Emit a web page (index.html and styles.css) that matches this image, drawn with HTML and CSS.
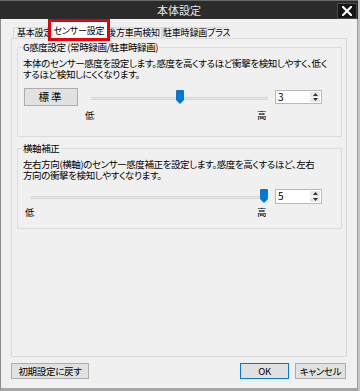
FILE: index.html
```html
<!DOCTYPE html>
<html lang="ja">
<head>
<meta charset="utf-8">
<title>本体設定</title>
<link rel="stylesheet" href="styles.css">
</head>
<body>
<div class="window">
  <div class="titlebar">
    <span class="title">本体設定</span>
    <span class="close">
      <svg width="10" height="10" viewBox="0 0 10 10"><path d="M1 1L9 9M9 1L1 9" stroke="#fff" stroke-width="2.2" stroke-linecap="square"/></svg>
    </span>
  </div>
  <div class="tabs">
    <div class="tab t1">基本設定</div>
    <div class="tab t2 selected">センサー設定</div>
    <div class="tab t3">後方車両検知</div>
    <div class="tab t4">駐車時録画プラス</div>
  </div>
  <div class="panel">
    <fieldset class="group g1">
      <legend>G感度設定 (常時録画/駐車時録画)</legend>
      <p class="desc"><span class="line">本体のセンサー感度を設定します。感度を高くするほど衝撃を検知しやすく、低く</span><span class="line">するほど検知しにくくなります。</span></p>
      <div class="row">
        <button class="btn std">標準</button>
        <div class="slider">
          <div class="track"></div>
          <svg class="thumb" style="left: calc((100% - 8px) * 0.5)" width="8" height="14" viewBox="0 0 8 14"><path d="M0 1Q0 0 1 0H7Q8 0 8 1V10L4 14L0 10Z" fill="#0078d7"/></svg>
        </div>
        <div class="spin">
          <span class="val">3</span>
          <span class="arrows">
            <span class="arr"><svg width="5" height="3" viewBox="0 0 5 3"><path d="M0 3L2.5 0L5 3Z" fill="#333"/></svg></span>
            <span class="arr"><svg width="5" height="3" viewBox="0 0 5 3"><path d="M0 0L2.5 3L5 0Z" fill="#333"/></svg></span>
          </span>
        </div>
      </div>
      <div class="scale">
        <span>低</span><span>高</span>
      </div>
    </fieldset>
    <fieldset class="group g2">
      <legend>横軸補正</legend>
      <p class="desc"><span class="line">左右方向(横軸)のセンサー感度補正を設定します。感度を高くするほど、左右</span><span class="line">方向の衝撃を検知しやすくなります。</span></p>
      <div class="row">
        <div class="slider">
          <div class="track"></div>
          <svg class="thumb" style="left: calc((100% - 8px) * 1)" width="8" height="14" viewBox="0 0 8 14"><path d="M0 1Q0 0 1 0H7Q8 0 8 1V10L4 14L0 10Z" fill="#0078d7"/></svg>
        </div>
        <div class="spin">
          <span class="val">5</span>
          <span class="arrows">
            <span class="arr"><svg width="5" height="3" viewBox="0 0 5 3"><path d="M0 3L2.5 0L5 3Z" fill="#333"/></svg></span>
            <span class="arr"><svg width="5" height="3" viewBox="0 0 5 3"><path d="M0 0L2.5 3L5 0Z" fill="#333"/></svg></span>
          </span>
        </div>
      </div>
      <div class="scale">
        <span>低</span><span>高</span>
      </div>
    </fieldset>
  </div>
  <div class="footer">
    <button class="btn reset">初期設定に戻す</button>
    <span class="spacer"></span>
    <button class="btn ok">OK</button>
    <button class="btn cancel">キャンセル</button>
  </div>
</div>
</body>
</html>
```
FILE: styles.css
```css
html, body {
  margin: 0;
  padding: 0;
}
body {
  width: 360px;
  height: 391px;
  overflow: hidden;
  background: #c4c4c4;
  font-family: "Noto Sans CJK JP", "Noto Sans", sans-serif;
  font-size: 9.5px;
  font-feature-settings: "palt";
  letter-spacing: -0.4px;
  color: #000;
}
.window {
  width: 358px;
  height: 391px;
  box-sizing: border-box;
  background: #f0f0f0;
  border-left: 1px solid #8c8c8c;
  border-right: 1px solid #9c9c9c;
  border-bottom: 3px solid #a6a6a6;
  display: flex;
  flex-direction: column;
}
.titlebar {
  height: 19px;
  flex: none;
  background: #2b2b2b;
  border-top: 1px solid #6a6a6a;
  box-sizing: border-box;
  display: grid;
  grid-template-columns: 1fr auto 1fr;
  align-items: start;
  margin: 0 -1px;
}
.title {
  grid-column: 2;
  color: #e6e6e6;
  font-size: 11px;
  line-height: 18px;
  letter-spacing: 0;
}
.close {
  grid-column: 3;
  justify-self: end;
  margin-top: 2px;
  margin-right: 1px;
  width: 20px;
  height: 16px;
  box-sizing: border-box;
  background: #161616;
  border: 1px solid #4a4a4a;
  display: flex;
  align-items: center;
  justify-content: center;
}
.tabs {
  height: 19px;
  flex: none;
  display: flex;
  align-items: flex-end;
  padding-left: 12px;
  font-size: 9px;
  letter-spacing: -0.2px;
}
.tab {
  height: 11px;
  box-sizing: border-box;
  border: 1px solid #d9d9d9;
  border-bottom: none;
  background: #f0f0f0;
  line-height: 10px;
  white-space: nowrap;
  text-align: center;
}
.t1 { width: 40px; text-align: left; padding-left: 3px; }
.t3 { width: 57px; margin-left: -2px; }
.t4 { width: 66px; }
.tab.selected {
  width: 56px;
  height: 16px;
  margin-left: -2px;
  background: #fff;
  border-color: #fff;
  line-height: 16px;
  position: relative;
  z-index: 2;
  outline: 3px solid #e8000b;
}
.panel {
  height: 319px;
  flex: none;
  box-sizing: border-box;
  margin: 0 10px;
  border: 1px solid #d9d9d9;
  background: #f0f0f0;
  padding: 0 4px 0 5px;
}
.group {
  border: 1px solid #dcdcdc;
  margin: 2px 0 0;
  padding: 0 5px;
  min-width: 0;
}
.group legend {
  padding: 0 1px;
  margin-left: -1px;
  line-height: 12px;
}
.desc {
  margin: 5px 0 0;
  white-space: nowrap;
  display: flex;
  flex-direction: column;
}
.line {
  display: block;
  height: 11px;
  line-height: 11px;
}
.row {
  display: flex;
  align-items: center;
}
.g1 .row {
  margin-top: 8px;
  height: 18px;
}
.g2 .row {
  margin-top: 7px;
  height: 16px;
}
.btn {
  font-family: inherit;
  font-size: 9.5px;
  letter-spacing: -0.3px;
  font-feature-settings: "palt";
  color: #000;
  background: #e1e1e1;
  border: 1px solid #adadad;
  padding: 0;
  margin: 0;
  box-sizing: border-box;
  line-height: 14px;
}
.std {
  width: 54px;
  height: 18px;
  margin-left: 1px;
  font-size: 10.5px;
  letter-spacing: 2px;
}
.slider {
  position: relative;
  height: 16px;
  flex: none;
}
.g1 .slider { width: 177px; margin-left: 13px; }
.g2 .slider { width: 237px; margin-left: 8px; }
.track {
  margin-top: 8px;
  height: 1px;
  background: #e7e7e7;
  border-top: 1px solid #d6d6d6;
  border-bottom: 1px solid #d6d6d6;
}
.thumb {
  position: absolute;
  top: 1px;
  display: block;
}
.spin {
  margin-left: 7px;
  width: 47px;
  height: 14px;
  box-sizing: border-box;
  border: 1px solid #b9b9b9;
  background: #fff;
  display: flex;
  flex: none;
}
.g2 .spin { height: 15px; }
.val {
  flex: 1;
  padding-left: 2px;
  line-height: 12px;
  font-size: 10px;
}
.arrows {
  width: 10px;
  margin: 1px 1px 1px 0;
  display: flex;
  flex-direction: column;
  gap: 1px;
}
.arr {
  flex: 1;
  background: #e8e8e8;
  display: flex;
  align-items: center;
  justify-content: center;
}
.arr svg { display: block; }
.scale {
  display: flex;
  justify-content: space-between;
  line-height: 11px;
}
.g1 .scale {
  margin: 4px 0 0 62px;
  width: 181px;
  padding-bottom: 15px;
}
.g2 .scale {
  margin: 3px 0 0 2px;
  width: 241px;
  padding-bottom: 10px;
}
.g2 {
  margin-top: 5px;
}
.footer {
  display: flex;
  margin: 6px 11px 0 10px;
  height: 16px;
}
.footer .btn { height: 16px; }
.reset { width: 78px; }
.spacer { flex: 1; }
.ok { width: 49px; border-color: #0078d7; }
.cancel { width: 51px; margin-left: 6px; }
```
